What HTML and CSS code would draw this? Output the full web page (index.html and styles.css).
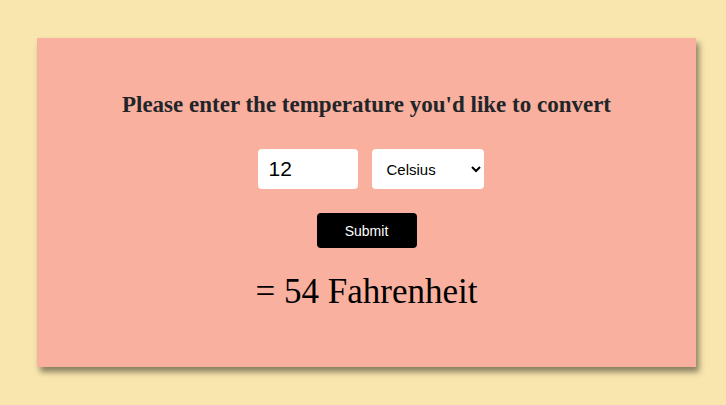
FILE: index.html
```html
<!DOCTYPE html>
<html>
<head>
<meta charset="utf-8">
<link rel="stylesheet" href="styles.css">
</head>
<body>
<main class="card">
  <h1 class="title">Please enter the temperature you'd like to convert</h1>
  <form class="form">
    <div class="row">
      <input class="num" type="text" value="12">
      <select class="unit">
        <option>Celsius</option>
        <option>Fahrenheit</option>
      </select>
    </div>
    <button class="submit" type="button">Submit</button>
  </form>
  <p class="result">= 54 Fahrenheit</p>
</main>
</body>
</html>
```
FILE: styles.css
```css
html, body {
  margin: 0;
  padding: 0;
}
body {
  background: #f9e6ae;
  padding: 38px 30px 38px 37px;
  font-family: "Liberation Serif", serif;
  color: #212529;
}
.card {
  width: 659px;
  height: 329px;
  box-sizing: border-box;
  background: #f9b09e;
  box-shadow: 3px 5px 6px rgba(0, 0, 0, 0.45);
  display: flex;
  flex-direction: column;
  align-items: center;
  padding-top: 53px;
}
.title {
  margin: 0;
  font-size: 23px;
  line-height: 28px;
  font-weight: bold;
}
.form {
  display: flex;
  flex-direction: column;
  align-items: center;
  margin-top: 30px;
}
.row {
  display: flex;
  gap: 14px;
  margin-left: 8px;
}
.num {
  width: 100px;
  height: 40px;
  box-sizing: border-box;
  border: none;
  border-radius: 4px;
  background: #fff;
  padding: 0 11px;
  font-family: "Liberation Sans", Arial, sans-serif;
  font-size: 21px;
  color: #000;
  outline: none;
}
.unit {
  width: 112px;
  height: 40px;
  box-sizing: border-box;
  border: none;
  border-radius: 4px;
  background: #fff;
  padding: 0 4px 0 11px;
  font-family: "Liberation Sans", Arial, sans-serif;
  font-size: 15px;
  color: #000;
}
.submit {
  margin-top: 24px;
  width: 100px;
  height: 35px;
  border: none;
  border-radius: 4px;
  background: #000;
  color: #fff;
  font-family: "Liberation Sans", Arial, sans-serif;
  font-size: 14px;
}
.result {
  margin: 24px 0 0;
  font-size: 35px;
  line-height: 40px;
  color: #000;
}
```
